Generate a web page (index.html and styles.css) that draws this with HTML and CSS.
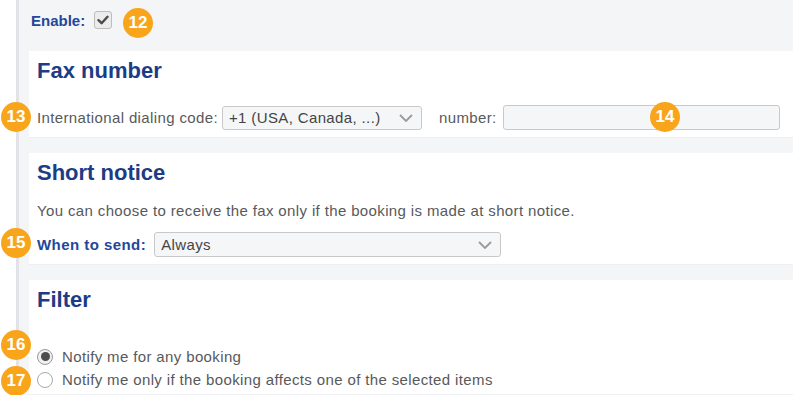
FILE: index.html
```
<!DOCTYPE html>
<html>
<head>
<meta charset="utf-8">
<link rel="stylesheet" href="styles.css">
</head>
<body>
<div class="page">
  <div class="rail"></div>
  <main class="content">
    <div class="enable-row">
      <span class="label">Enable:</span>
      <span class="checkbox">
        <svg width="12" height="10" viewBox="0 0 12 10"><path d="M1.5 5.2 L4.6 8.2 L10.5 1.8" fill="none" stroke="#4a4a4a" stroke-width="2.4" stroke-linecap="round" stroke-linejoin="round"/></svg>
      </span>
    </div>

    <section class="card">
      <h2 class="card-title">Fax number</h2>
      <div class="row row-fax">
        <span class="text">International dialing code:</span>
        <div class="select sel-code">
          <span class="sel-value">+1 (USA, Canada, ...)</span>
          <svg class="chev" width="14" height="8" viewBox="0 0 14 8"><path d="M1 1 L7 7 L13 1" fill="none" stroke="#9a9a9a" stroke-width="1.8"/></svg>
        </div>
        <span class="text num-label">number:</span>
        <div class="input"></div>
      </div>
    </section>

    <section class="card">
      <h2 class="card-title">Short notice</h2>
      <p class="desc">You can choose to receive the fax only if the booking is made at short notice.</p>
      <div class="row row-send">
        <span class="label label-wide">When to send:</span>
        <div class="select sel-send">
          <span class="sel-value">Always</span>
          <svg class="chev" width="14" height="8" viewBox="0 0 14 8"><path d="M1 1 L7 7 L13 1" fill="none" stroke="#9a9a9a" stroke-width="1.8"/></svg>
        </div>
      </div>
    </section>

    <section class="card card-filter">
      <h2 class="card-title">Filter</h2>
      <div class="radios">
        <label class="radio-row"><span class="radio checked"></span><span class="text">Notify me for any booking</span></label>
        <label class="radio-row"><span class="radio"></span><span class="text">Notify me only if the booking affects one of the selected items</span></label>
      </div>
    </section>
  </main>

  <span class="badge b12">12</span>
  <span class="badge b13">13</span>
  <span class="badge b14">14</span>
  <span class="badge b15">15</span>
  <span class="badge b16">16</span>
  <span class="badge b17">17</span>
</div>
</body>
</html>
```

FILE: styles.css
```
html, body {
  margin: 0;
  padding: 0;
}
body {
  width: 793px;
  height: 395px;
  overflow: hidden;
  background: #ffffff;
  font-family: "Liberation Sans", Arial, sans-serif;
}
.page {
  position: relative;
  display: flex;
  height: 395px;
}
.rail {
  width: 16px;
  flex: none;
  background: #ffffff;
  border-right: 3px solid #e2e3e8;
}
.content {
  flex: 1;
  background: #f4f5f7;
  padding-left: 10px;
  overflow: hidden;
}
.label {
  font-size: 15px;
  font-weight: bold;
  color: #23479a;
}
.label-wide {
  letter-spacing: 0.45px;
}
.text {
  font-size: 15px;
  letter-spacing: 0.37px;
  color: #58595b;
}
.enable-row {
  display: flex;
  align-items: center;
  gap: 9px;
  height: 18px;
  padding: 11px 0 0 2px;
  margin-bottom: 22px;
}
.checkbox {
  width: 16px;
  height: 16px;
  border: 1px solid #bdbdbd;
  border-radius: 3px;
  background: #ececec;
  display: flex;
  align-items: center;
  justify-content: center;
}
.card {
  background: #ffffff;
  padding: 7px 0 7px 8px;
  margin-bottom: 15px;
  border-bottom: 1px solid #eeeff2;
}
.card-title {
  margin: 0;
  font-size: 22px;
  line-height: 26px;
  font-weight: bold;
  color: #1c3c85;
}
.row {
  display: flex;
  align-items: center;
  height: 25px;
}
.row-fax {
  margin-top: 21px;
}
.select {
  box-sizing: border-box;
  height: 24px;
  border: 1px solid #c9c9c9;
  border-radius: 3px;
  background: #f5f6f8;
  display: flex;
  align-items: center;
  justify-content: space-between;
  padding: 0 8px 0 6px;
  font-size: 15px;
  letter-spacing: 0.37px;
  color: #444;
}
.sel-code {
  width: 200px;
  margin-left: 4px;
}
.num-label {
  margin-left: 17px;
}
.input {
  box-sizing: border-box;
  width: 277px;
  height: 25px;
  margin-left: 6px;
  border: 1px solid #c9c9c9;
  border-radius: 3px;
  background: #f5f6f8;
}
.desc {
  margin: 15px 0 0;
  font-size: 15px;
  letter-spacing: 0.37px;
  line-height: 20px;
  color: #58595b;
}
.row-send {
  margin-top: 11px;
}
.sel-send {
  width: 347px;
  height: 25px;
  margin-left: 8px;
}
.card-filter {
  padding-bottom: 3px;
}
.radios {
  margin-top: 32px;
}
.radio-row {
  display: flex;
  align-items: center;
  height: 23px;
  gap: 9px;
}
.radio {
  box-sizing: border-box;
  width: 16px;
  height: 16px;
  border-radius: 50%;
  border: 1px solid #a8a8a8;
  background: #ffffff;
  display: flex;
  align-items: center;
  justify-content: center;
}
.radio.checked {
  border-color: #9a9a9a;
  background: #f0f0f0;
}
.radio.checked::after {
  content: "";
  width: 9px;
  height: 9px;
  border-radius: 50%;
  background: #4d4d4d;
}
.badge {
  position: absolute;
  width: 30px;
  height: 30px;
  border-radius: 50%;
  background: #f9a51b;
  color: #ffffff;
  font-size: 17px;
  font-weight: bold;
  line-height: 30px;
  text-align: center;
}
.b12 { left: 123px; top: 8px; }
.b13 { left: 1px; top: 102px; }
.b14 { left: 650px; top: 102px; }
.b15 { left: 1px; top: 228px; }
.b16 { left: 1px; top: 330px; }
.b17 { left: 1px; top: 366px; }
```
